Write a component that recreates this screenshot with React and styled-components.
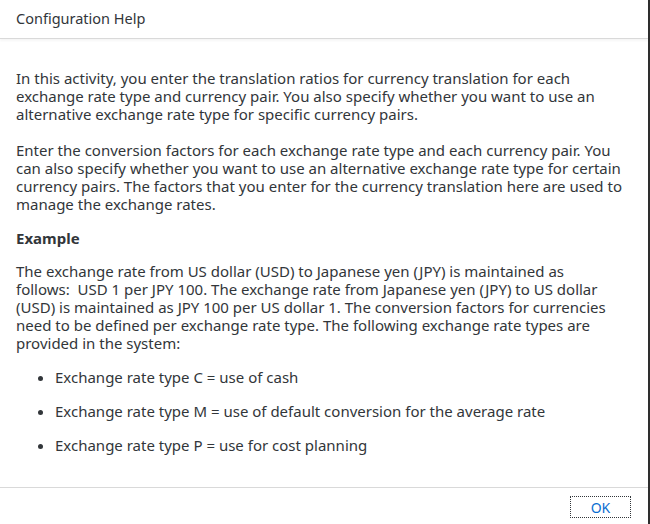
import React from "react";
import styled, { createGlobalStyle } from "styled-components";

const Global = createGlobalStyle`
  html, body {
    margin: 0;
    padding: 0;
    background: #ffffff;
  }
  body {
    font-family: "Noto Sans", "Liberation Sans", sans-serif;
    color: #32363a;
  }
`;

const bullets = [
  "Exchange rate type C = use of cash",
  "Exchange rate type M = use of default conversion for the average rate",
  "Exchange rate type P = use for cost planning",
];

const App = () => {
  return (
    <>
      <Global />
      <Dialog>
        <Header>
          <Title>Configuration Help</Title>
        </Header>
        <Body>
          <Para>
            In this activity, you enter the translation ratios for currency
            translation for each exchange rate type and currency pair. You also
            specify whether you want to use an alternative exchange rate type
            for specific currency pairs.
          </Para>
          <Para>
            Enter the conversion factors for each exchange rate type and each
            currency pair. You can also specify whether you want to use an
            alternative exchange rate type for certain currency pairs. The
            factors that you enter for the currency translation here are used
            to manage the exchange rates.
          </Para>
          <Heading>Example</Heading>
          <Para>
            The exchange rate from US dollar (USD) to Japanese yen (JPY) is
            maintained as
            <br />
            follows:&nbsp; USD 1 per JPY 100. The exchange rate from Japanese
            yen (JPY) to US dollar (USD) is maintained as JPY 100 per US dollar
            1. The conversion factors for currencies need to be defined per
            exchange rate type. The following exchange rate types are provided
            in the system:
          </Para>
          <List>
            {bullets.map((b) => (
              <Item key={b}>{b}</Item>
            ))}
          </List>
        </Body>
        <Footer>
          <Button>OK</Button>
        </Footer>
      </Dialog>
    </>
  );
};

const Dialog = styled.div`
  display: flex;
  flex-direction: column;
  width: 650px;
  height: 524px;
  box-sizing: border-box;
  border-right: 2px solid #2e2e2e;
  background: #ffffff;
`;

const Header = styled.header`
  display: flex;
  align-items: center;
  height: 38px;
  padding: 0 16px;
  flex-shrink: 0;
  border-bottom: 1px solid #d9d9d9;
  box-shadow: 0 2px 2px rgba(0, 0, 0, 0.04);
`;

const Title = styled.div`
  font-size: 14.5px;
  color: #32363a;
  margin-top: -2px;
`;

const Body = styled.main`
  flex: 1;
  padding: 30px 22px 0 16px;
  font-size: 15px;
  line-height: 18px;
  overflow: hidden;
`;

const Para = styled.p`
  margin: 0 0 18px;
`;

const Heading = styled.div`
  font-weight: 700;
  margin: -2px 0 15px;
`;

const List = styled.ul`
  margin: -2px 0 0;
  padding-left: 39px;
`;

const Item = styled.li`
  margin-bottom: 16px;
`;

const Footer = styled.footer`
  display: flex;
  justify-content: flex-end;
  align-items: center;
  height: 36px;
  padding: 0 17px 0 0;
  flex-shrink: 0;
  border-top: 1px solid #d9d9d9;
`;

const Button = styled.button`
  width: 61px;
  height: 22px;
  margin-top: 2px;
  border: 1px dotted #32363a;
  background: #ffffff;
  color: #0a6ed1;
  font-family: "Noto Sans", "Liberation Sans", sans-serif;
  font-size: 14px;
  padding: 0;
`;

export default App;
